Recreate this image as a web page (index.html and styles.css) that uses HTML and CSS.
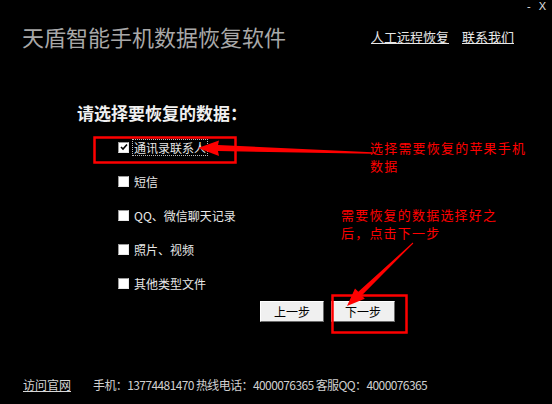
FILE: index.html
```html
<!DOCTYPE html>
<html lang="zh-CN">
<head>
    <meta charset="UTF-8">
    <meta name="viewport" content="width=device-width, initial-scale=1.0">
    <title>天盾智能手机数据恢复软件</title>
    <link rel="stylesheet" href="styles.css">
</head>
<body>
    <div class="topbar">
        <span class="win-btn">-</span>
        <span class="win-btn">X</span>
    </div>

    <div class="header">
        <h1 class="app-title">天盾智能手机数据恢复软件</h1>
        <div class="header-links">
            <a href="#">人工远程恢复</a>
            <a href="#">联系我们</a>
        </div>
    </div>

    <div class="main">
        <h2 class="section-title">请选择要恢复的数据：</h2>

        <ul class="options">
            <li class="option">
                <span class="check checked">
                    <svg viewBox="0 0 8 8" width="8" height="8"><path d="M1 4 L3 6 L7 1.5" fill="none" stroke="#000" stroke-width="1.6"/></svg>
                </span>
                <span class="option-label focused">通讯录联系人</span>
            </li>
            <li class="option">
                <span class="check"></span>
                <span class="option-label">短信</span>
            </li>
            <li class="option">
                <span class="check"></span>
                <span class="option-label">QQ、微信聊天记录</span>
            </li>
            <li class="option">
                <span class="check"></span>
                <span class="option-label">照片、视频</span>
            </li>
            <li class="option">
                <span class="check"></span>
                <span class="option-label">其他类型文件</span>
            </li>
        </ul>

        <div class="actions">
            <button class="step-btn">上一步</button>
            <button class="step-btn">下一步</button>
        </div>
    </div>

    <div class="footer">
        <a href="#">访问官网</a>
        <span class="contact">手机：13774481470 热线电话：4000076365 客服QQ：4000076365</span>
    </div>

    <!-- annotations -->
    <svg class="marks" width="552" height="404" viewBox="0 0 552 404">
        <rect x="94.5" y="137.5" width="141" height="25" fill="none" stroke="#ff0000" stroke-width="2.5"/>
        <rect x="332.5" y="295.5" width="74" height="37" fill="none" stroke="#ff0000" stroke-width="2.5"/>
        <polygon points="198,148 219,140.5 218,145 372,152.3 372,153.7 218,151 219,156" fill="#ff0000"/>
        <polygon points="347,306 355,288.5 358.3,291.8 412.7,242.6 413.3,243.4 361.7,295.4 364.8,298.7" fill="#ff0000"/>
    </svg>
    <div class="note note-one">选择需要恢复的苹果手机<br>数据</div>
    <div class="note note-two">需要恢复的数据选择好之<br>后，点击下一步</div>
</body>
</html>
```

FILE: styles.css
```css
* {
    box-sizing: border-box;
    margin: 0;
    padding: 0;
    font-family: "Noto Sans CJK SC", sans-serif;
}

body {
    width: 552px;
    height: 404px;
    background-color: #000;
    color: #d8d8d8;
    display: flex;
    flex-direction: column;
    position: relative;
    overflow: hidden;
}

.topbar {
    display: flex;
    justify-content: flex-end;
    gap: 8px;
    height: 14px;
    padding-right: 6px;
}

.win-btn {
    font-size: 11px;
    line-height: 12px;
    color: #e0e0e0;
    font-family: "Liberation Sans", sans-serif;
}

.header {
    display: flex;
    justify-content: space-between;
    align-items: center;
    padding: 8px 38px 0 22px;
}

.app-title {
    font-size: 22px;
    font-weight: 400;
    line-height: 28px;
    color: #a8a8a8;
}

.header-links {
    display: flex;
    gap: 13px;
}

.header-links a {
    color: #e8e8e8;
    font-size: 13px;
    text-decoration: underline;
}

.main {
    padding-left: 77px;
    margin-top: 53px;
}

.section-title {
    font-size: 17px;
    font-weight: 700;
    line-height: 20px;
    color: #f0f0f0;
    margin-bottom: 7px;
}

.options {
    list-style: none;
    padding-left: 41px;
}

.option {
    display: flex;
    align-items: center;
    gap: 4px;
    height: 34px;
    font-size: 12px;
    color: #e8e8e8;
}

.check {
    width: 11px;
    height: 11px;
    background-color: #fff;
    border: 1px solid;
    border-color: #9a9a9a #e8e8e8 #e8e8e8 #9a9a9a;
    display: flex;
    align-items: center;
    justify-content: center;
}

.option-label {
    line-height: 15px;
    padding: 0 1px;
}

.option-label.focused {
    outline: 1px dotted #bbb;
}

.actions {
    display: flex;
    gap: 7px;
    margin-left: 183px;
    margin-top: 1px;
}

.step-btn {
    width: 64px;
    height: 21px;
    background-color: #f0f0f0;
    border: 1px solid;
    border-color: #fff #6a6a6a #6a6a6a #fff;
    font-size: 12px;
    color: #000;
}

.footer {
    margin-top: auto;
    display: flex;
    gap: 22px;
    padding: 0 0 11px 23px;
    font-size: 12px;
    line-height: 16px;
    color: #d0d0d0;
}

.footer a {
    color: #d8d8d8;
    text-decoration: underline;
}

.contact {
    letter-spacing: -0.6px;
}

.marks {
    position: absolute;
    top: 0;
    left: 0;
    pointer-events: none;
}

.note {
    position: absolute;
    color: #ff0000;
    font-size: 13px;
    letter-spacing: 1.2px;
    line-height: 18px;
}

.note-one {
    left: 370px;
    top: 139px;
}

.note-two {
    left: 341px;
    top: 206px;
}
```
